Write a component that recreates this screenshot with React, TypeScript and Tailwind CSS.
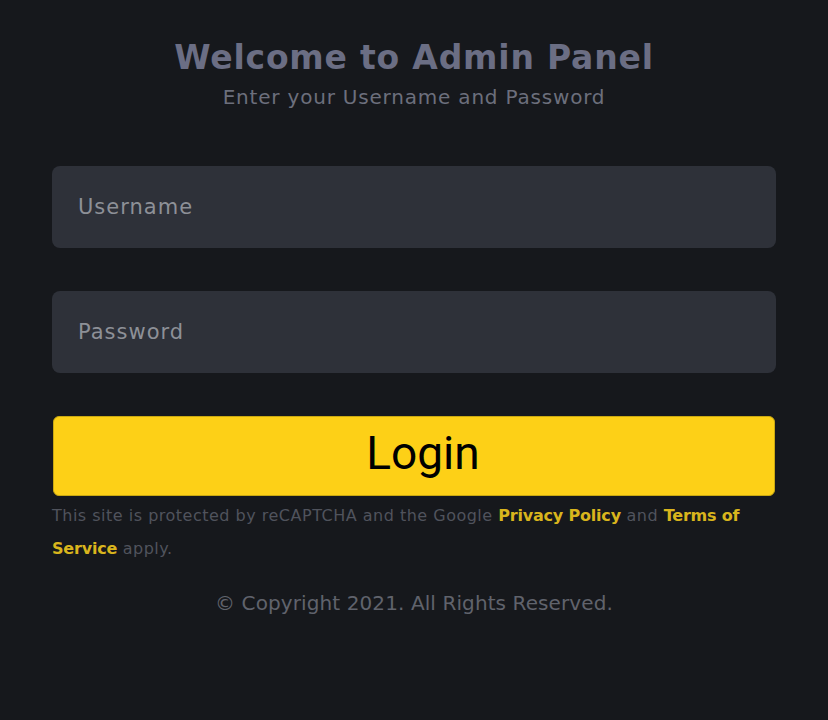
export default function App() {
  return (
    <div className="min-h-[720px] w-full bg-[#16181c] px-[52px] pt-[36px] font-['DejaVu_Sans',sans-serif]">
      {/* ── Header ─────────────────────────────────────────── */}
      <div className="text-center">
        <h1 className="text-[33px] leading-[44px] font-bold text-[#6b6e84] tracking-[0.8px]">
          Welcome to Admin Panel
        </h1>
        <p className="mt-[4px] text-[20px] leading-[26px] tracking-[0.8px] text-[#6c6f7c]">
          Enter your Username and Password
        </p>
      </div>

      {/* ── Form ───────────────────────────────────────────── */}
      <form className="mt-[56px] flex flex-col" onSubmit={e => e.preventDefault()}>
        <input
          type="text"
          placeholder="Username"
          className="h-[82px] w-full rounded-[8px] bg-[#2e3139] px-[26px] text-[21px] tracking-[1px] text-[#9a9ca3] placeholder:text-[#8d9097] outline-none"
        />
        <input
          type="password"
          placeholder="Password"
          className="mt-[43px] h-[82px] w-full rounded-[8px] bg-[#2e3139] px-[26px] text-[21px] tracking-[1px] text-[#9a9ca3] placeholder:text-[#8d9097] outline-none"
        />
        <button
          type="submit"
          className="mx-[1px] mt-[43px] h-[80px] rounded-[6px] border border-[#c9a812] bg-[#fdd017] pb-[6px] pl-[18px] font-['Roboto',sans-serif] text-[46px] leading-none text-black"
        >
          Login
        </button>
      </form>

      {/* ── reCAPTCHA notice ───────────────────────────────── */}
      <p className="mt-[3px] pr-[30px] text-[16px] leading-[33px] tracking-[0.5px] text-[#50535c]">
        This site is protected by reCAPTCHA and the Google{' '}
        <a className="font-bold tracking-[-0.2px] text-[#d9b51d]">Privacy Policy</a> and{' '}
        <a className="font-bold tracking-[-0.2px] text-[#d9b51d]">Terms of Service</a> apply.
      </p>

      {/* ── Footer ─────────────────────────────────────────── */}
      <p className="mt-[25px] text-center text-[20px] leading-[26px] tracking-[0.1px] text-[#60636c]">
        © Copyright 2021. All Rights Reserved.
      </p>
    </div>
  )
}
